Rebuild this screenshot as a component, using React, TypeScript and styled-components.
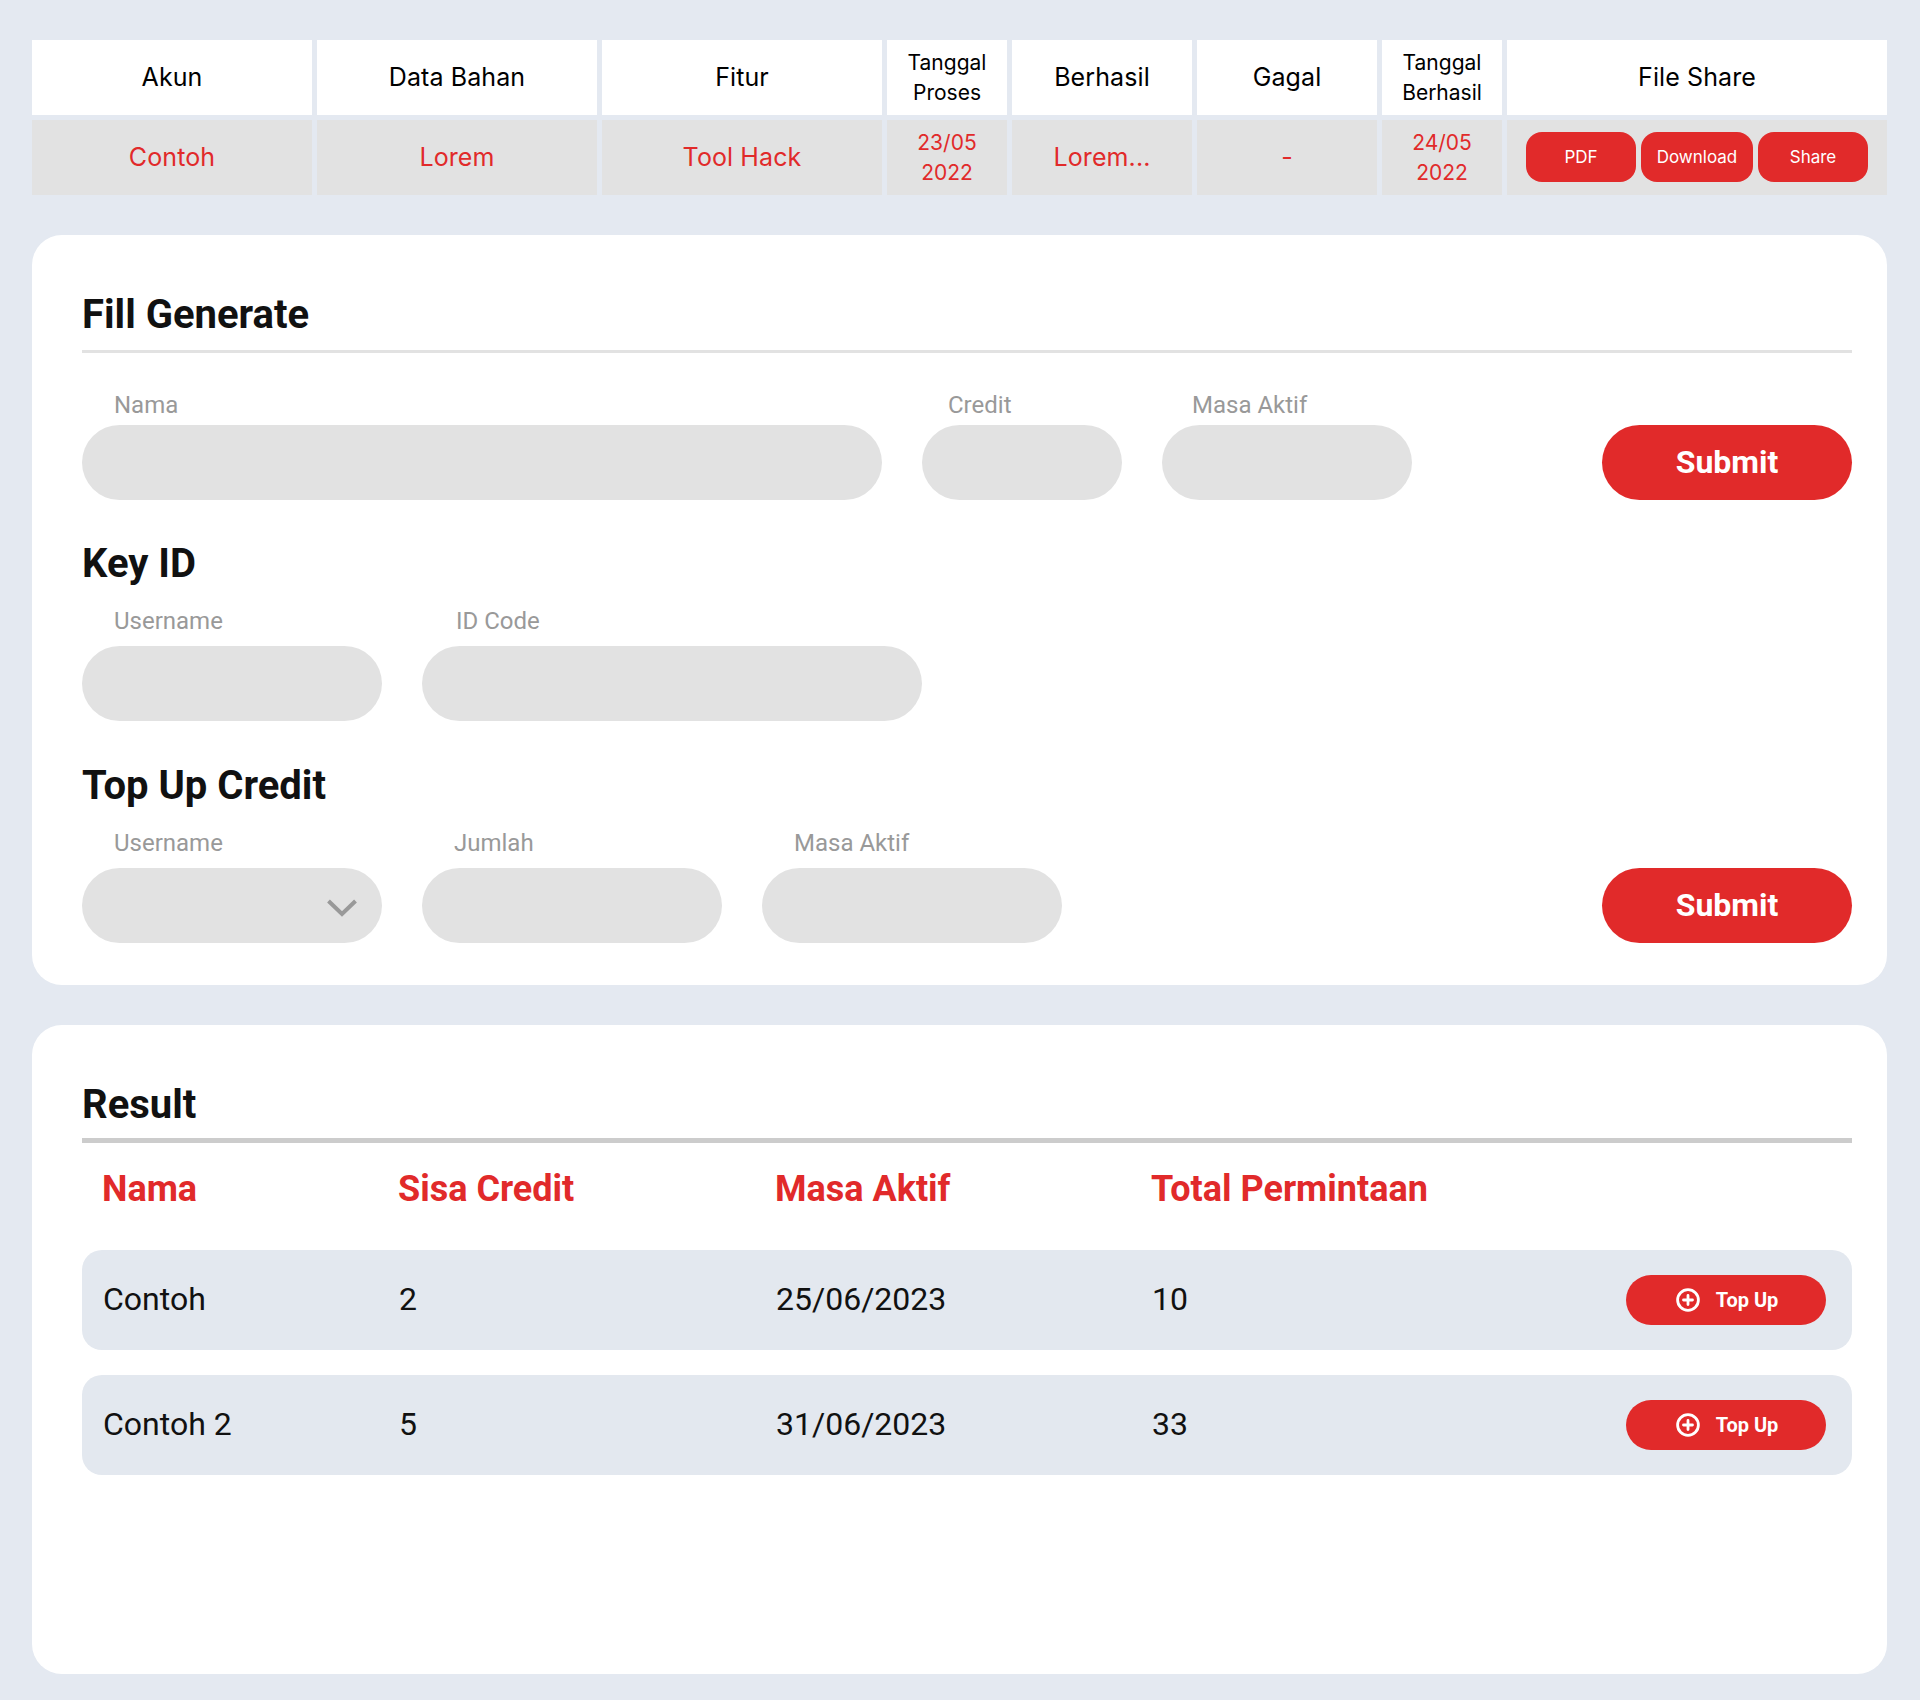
import { createGlobalStyle, styled } from 'styled-components';

const RED = '#e12a2a';
const PAGE_BG = '#e4e9f1';
const GREY = '#e2e2e2';
const TABLE_FONT = '"Inter", "Liberation Sans", sans-serif';

const GlobalStyle = createGlobalStyle`
  * { box-sizing: border-box; }
  body {
    margin: 0;
    background: ${PAGE_BG};
    font-family: Roboto, "Liberation Sans", sans-serif;
  }
`;

const Page = styled.div`
  display: flex;
  flex-direction: column;
  gap: 40px;
  padding: 40px 33px 26px 32px;
`;

const FilesTable = styled.div`
  display: grid;
  grid-template-columns: 280px 280px 280px 120px 180px 180px 120px 380px;
  grid-auto-rows: 75px;
  gap: 5px;
  font-family: ${TABLE_FONT};
`;

const HeadCell = styled.div<{ $small?: boolean }>`
  display: flex;
  align-items: center;
  justify-content: center;
  padding: ${({ $small }) => ($small ? '0 16px' : '0 0 2px')};
  text-align: center;
  background: #fff;
  color: #000;
  font-size: ${({ $small }) => ($small ? '21px' : '25px')};
  line-height: ${({ $small }) => ($small ? '30px' : '32px')};
  letter-spacing: ${({ $small }) => ($small ? '0' : '0.1px')};
`;

const BodyCell = styled(HeadCell)`
  background: ${GREY};
  color: ${RED};
`;

const ShareCell = styled(BodyCell)`
  gap: 5px;
`;

const ShareButton = styled.button<{ $width: number }>`
  width: ${({ $width }) => $width}px;
  height: 50px;
  padding: 0;
  border: 0;
  border-radius: 16px;
  background: ${RED};
  color: #fff;
  font-family: ${TABLE_FONT};
  font-size: 17px;
`;

const Card = styled.section<{ $minHeight?: number }>`
  min-height: ${({ $minHeight }) => $minHeight ?? 0}px;
  padding: 56px 35px 42px 50px;
  border-radius: 30px;
  background: #fff;
`;

const Title = styled.h2`
  margin: 0;
  color: #111;
  font-size: 40px;
  font-weight: 700;
  line-height: 47px;
`;

const TitleRule = styled.div<{ $thick?: boolean }>`
  height: ${({ $thick }) => ($thick ? 5 : 3)}px;
  margin-top: ${({ $thick }) => ($thick ? 10 : 12)}px;
  background: ${({ $thick }) => ($thick ? '#cccccc' : GREY)};
`;

const FormRow = styled.div<{ $top: number; $labelGap: number }>`
  display: flex;
  align-items: flex-end;
  gap: 40px;
  margin-top: ${({ $top }) => $top}px;

  label {
    gap: ${({ $labelGap }) => $labelGap}px;
  }
`;

const Field = styled.label<{ $width: number }>`
  position: relative;
  display: flex;
  flex-direction: column;
  width: ${({ $width }) => $width}px;
`;

const FieldLabel = styled.span<{ $indent?: number }>`
  padding-left: ${({ $indent }) => $indent ?? 32}px;
  color: #999;
  font-size: 24px;
  line-height: 28px;
`;

const TextInput = styled.input`
  height: 75px;
  width: 100%;
  border: 0;
  border-radius: 38px;
  background: ${GREY};
`;

const SelectBox = styled.div`
  height: 75px;
  border-radius: 38px;
  background: ${GREY};
`;

const Chevron = styled.svg`
  position: absolute;
  right: 25px;
  bottom: 26px;
  width: 30px;
  height: 18px;
`;

const SubmitButton = styled.button`
  width: 250px;
  height: 75px;
  margin-left: auto;
  padding: 0 0 1px;
  border: 0;
  border-radius: 38px;
  background: ${RED};
  color: #fff;
  font-family: Roboto, sans-serif;
  font-size: 32px;
  font-weight: 700;
`;

const SectionTitle = styled(Title)<{ $top: number }>`
  margin-top: ${({ $top }) => $top}px;
`;

const ResultHead = styled.div`
  display: grid;
  grid-template-columns: 296px 377px 376px 1fr;
  align-items: center;
  height: 107px;
  padding: 0 26px 15px 20px;
  color: ${RED};
  font-size: 36px;
  font-weight: 700;
`;

const ResultList = styled.div`
  display: flex;
  flex-direction: column;
  gap: 25px;
`;

const ResultRow = styled.div`
  display: grid;
  grid-template-columns: 296px 377px 376px 1fr auto;
  align-items: center;
  height: 100px;
  padding: 0 26px 0 21px;
  border-radius: 20px;
  background: #e3e8ef;
  color: #111;
  font-size: 32px;
`;

const RowValue = styled.span`
  padding-bottom: 3px;
`;

const TopUpButton = styled.button`
  display: flex;
  align-items: center;
  justify-content: center;
  gap: 16px;
  width: 200px;
  height: 50px;
  padding: 0 0 0 2px;
  border: 0;
  border-radius: 25px;
  background: ${RED};
  color: #fff;
  font-family: Roboto, sans-serif;
  font-size: 20px;
  font-weight: 700;
`;

const PlusCircle = () => (
  <svg width="24" height="24" viewBox="0 0 24 24" fill="none" stroke="#fff" strokeWidth="2.8" strokeLinecap="round">
    <circle cx="12" cy="12" r="10.4" />
    <path d="M12 7.5v9M7.5 12h9" />
  </svg>
);

const headers = ['Akun', 'Data Bahan', 'Fitur', 'Tanggal Proses', 'Berhasil', 'Gagal', 'Tanggal Berhasil', 'File Share'];
const results = [
  { name: 'Contoh', credit: '2', until: '25/06/2023', total: '10' },
  { name: 'Contoh 2', credit: '5', until: '31/06/2023', total: '33' },
];

const App = () => (
  <Page>
    <GlobalStyle />
    <FilesTable>
      {headers.map((header) => (
        <HeadCell key={header} $small={header.startsWith('Tanggal')}>
          {header}
        </HeadCell>
      ))}
      <BodyCell>Contoh</BodyCell>
      <BodyCell>Lorem</BodyCell>
      <BodyCell>Tool Hack</BodyCell>
      <BodyCell $small>23/05 2022</BodyCell>
      <BodyCell>Lorem...</BodyCell>
      <BodyCell>-</BodyCell>
      <BodyCell $small>24/05 2022</BodyCell>
      <ShareCell>
        <ShareButton $width={110}>PDF</ShareButton>
        <ShareButton $width={112}>Download</ShareButton>
        <ShareButton $width={110}>Share</ShareButton>
      </ShareCell>
    </FilesTable>

    <Card>
      <Title>Fill Generate</Title>
      <TitleRule />
      <FormRow $top={38} $labelGap={6}>
        <Field $width={800}>
          <FieldLabel>Nama</FieldLabel>
          <TextInput />
        </Field>
        <Field $width={200}>
          <FieldLabel $indent={26}>Credit</FieldLabel>
          <TextInput />
        </Field>
        <Field $width={250}>
          <FieldLabel $indent={30}>Masa Aktif</FieldLabel>
          <TextInput />
        </Field>
        <SubmitButton>Submit</SubmitButton>
      </FormRow>

      <SectionTitle $top={40}>Key ID</SectionTitle>
      <FormRow $top={20} $labelGap={11}>
        <Field $width={300}>
          <FieldLabel>Username</FieldLabel>
          <TextInput />
        </Field>
        <Field $width={500}>
          <FieldLabel $indent={34}>ID Code</FieldLabel>
          <TextInput />
        </Field>
      </FormRow>

      <SectionTitle $top={41}>Top Up Credit</SectionTitle>
      <FormRow $top={20} $labelGap={11}>
        <Field $width={300}>
          <FieldLabel>Username</FieldLabel>
          <SelectBox />
          <Chevron viewBox="0 0 30 18" fill="none" stroke="#999" strokeWidth="4">
            <path d="M1.5 2 15 15 28.5 2" />
          </Chevron>
        </Field>
        <Field $width={300}>
          <FieldLabel>Jumlah</FieldLabel>
          <TextInput />
        </Field>
        <Field $width={300}>
          <FieldLabel>Masa Aktif</FieldLabel>
          <TextInput />
        </Field>
        <SubmitButton>Submit</SubmitButton>
      </FormRow>
    </Card>

    <Card $minHeight={649}>
      <Title>Result</Title>
      <TitleRule $thick />
      <ResultHead>
        <span>Nama</span>
        <span>Sisa Credit</span>
        <span>Masa Aktif</span>
        <span>Total Permintaan</span>
      </ResultHead>
      <ResultList>
        {results.map((row) => (
          <ResultRow key={row.name}>
            <RowValue>{row.name}</RowValue>
            <RowValue>{row.credit}</RowValue>
            <RowValue>{row.until}</RowValue>
            <RowValue>{row.total}</RowValue>
            <TopUpButton>
              <PlusCircle />
              Top Up
            </TopUpButton>
          </ResultRow>
        ))}
      </ResultList>
    </Card>
  </Page>
);

export default App;
